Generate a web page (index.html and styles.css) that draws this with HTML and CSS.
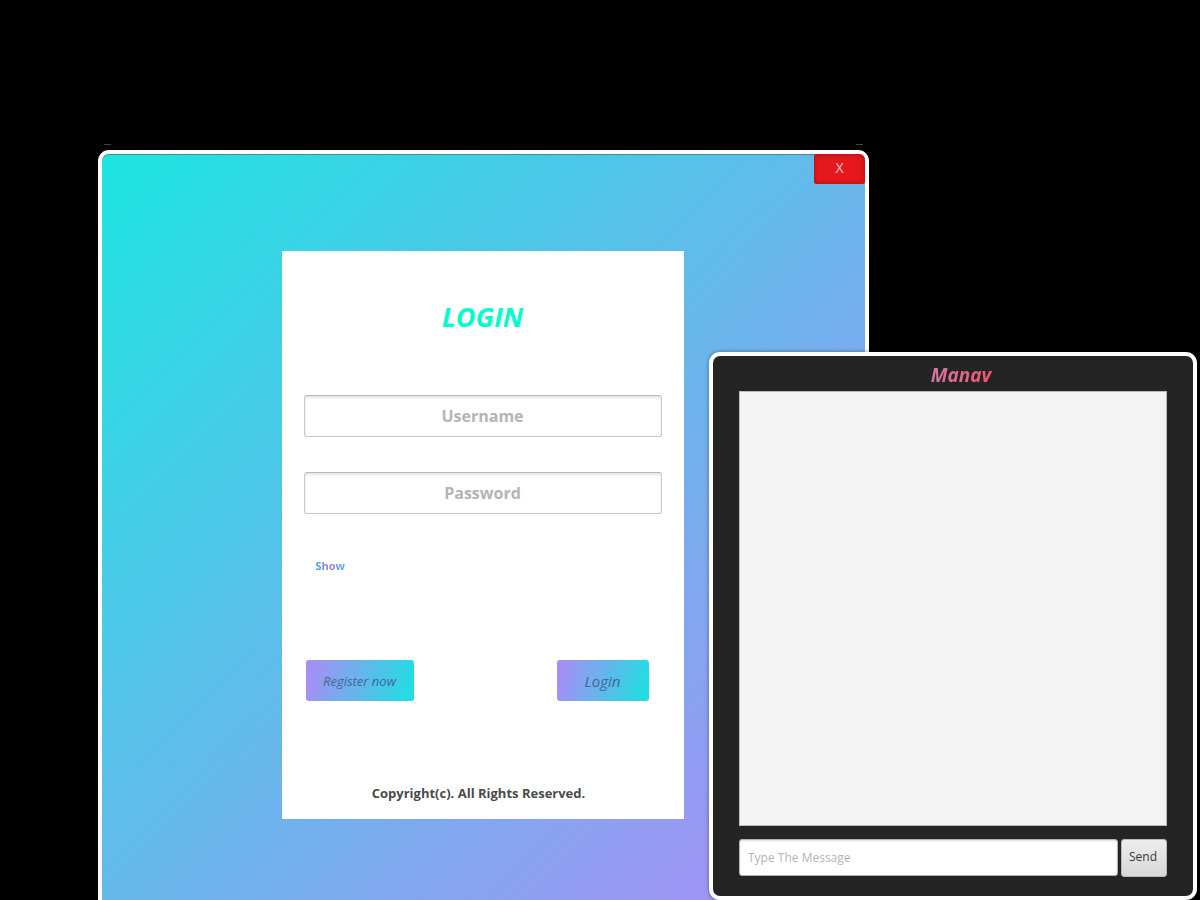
FILE: index.html
```html
<!DOCTYPE html>
<html lang="en">
<head>
<meta charset="utf-8">
<title>Login</title>
<link rel="stylesheet" href="styles.css">
</head>
<body>
<div class="desktop">
  <span class="tick tick-left"></span>
  <span class="tick tick-right"></span>
  <section class="window login-window">
    <button class="close" type="button">X</button>
    <main class="login-body">
      <form class="card">
        <h1 class="title">LOGIN</h1>
        <input class="field" type="text" placeholder="Username" aria-label="Username">
        <input class="field" type="password" placeholder="Password" aria-label="Password">
        <a class="show" href="#">Show</a>
        <div class="actions">
          <button class="action register" type="button">Register now</button>
          <button class="action login" type="submit">Login</button>
        </div>
        <p class="copyright">Copyright(c). All Rights Reserved.</p>
      </form>
    </main>
  </section>
  <section class="window chat-window">
    <h2 class="contact"><span class="contact-name">Manav</span></h2>
    <div class="messages"></div>
    <form class="composer">
      <input class="message" type="text" placeholder="Type The Message" aria-label="Message">
      <button class="send" type="button">Send</button>
    </form>
  </section>
</div>
</body>
</html>
```
FILE: styles.css
```css
* { box-sizing: border-box; }
body {
  margin: 0;
  background: #000;
  font-family: "Open Sans", "Noto Sans", sans-serif;
}
h1, h2, p { margin: 0; }
input, button { font-family: inherit; margin: 0; }

.desktop {
  position: relative;
  height: 100vh;
  overflow: hidden;
}
.tick {
  position: absolute;
  top: 144px;
  width: 7px;
  height: 1px;
  background: #444;
}
.tick-left { left: 104px; }
.tick-right { right: 337px; }

.window {
  position: absolute;
  border: 4px solid #fff;
  border-radius: 11px;
}

.login-window {
  top: 150px;
  left: 98px;
  right: 331px;
  background: linear-gradient(to bottom right, #1de5e1, #b08af7) padding-box;
  box-shadow: inset 0 1px 0 #3b8f96;
}
.close {
  position: absolute;
  top: 0;
  right: 0;
  width: 51px;
  height: 30px;
  padding: 0 0 4px;
  border: 0;
  border-radius: 3px 6px 3px 3px;
  background: #e5191d;
  box-shadow: inset 0 0 5px 1px #b81014;
  color: #f8c4c0;
  font-size: 14px;
}
.login-body {
  display: flex;
  justify-content: center;
  padding: 97px 2px 97px 0;
}
.card {
  display: flex;
  flex-direction: column;
  width: 402px;
  padding: 48px 22px 16px;
  background: #fff;
}
.title {
  color: #0fc;
  font-size: 27px;
  font-style: italic;
  line-height: 36px;
  text-align: center;
  margin-bottom: 60px;
}
.field {
  width: 100%;
  height: 42px;
  margin-bottom: 35px;
  border: 1px solid #c8c8c8;
  border-top-color: #b8b8b8;
  border-radius: 3px;
  background: #fff;
  box-shadow: inset 0 2px 3px #e4e4e4;
  font-size: 16px;
  font-weight: 700;
  text-align: center;
}
.field::placeholder { color: #b4b4b4; opacity: 1; }
.show {
  align-self: flex-start;
  margin: 7px 12px 84px;
  background: linear-gradient(90deg, #2fa8dc, #a874e0 50%, #3fb4e0);
  background-clip: text;
  color: transparent;
  font-size: 11px;
  font-weight: 700;
  line-height: 20px;
  text-decoration: none;
}
.actions {
  display: flex;
  justify-content: space-between;
  padding: 0 13px 0 2px;
  margin-bottom: 82px;
}
.action {
  height: 41px;
  padding: 0;
  border: 0;
  border-radius: 3px;
  background: linear-gradient(105deg, #ae8af7, #22dde1 94%);
  color: #3f6795;
  font-style: italic;
}
.register { width: 108px; font-size: 13px; }
.login { width: 92px; font-size: 15px; }
.copyright {
  color: #4a4a4a;
  font-size: 13px;
  font-weight: 700;
  line-height: 20px;
  text-align: center;
  padding-right: 8px;
}

.chat-window {
  display: flex;
  flex-direction: column;
  top: 352px;
  right: 3px;
  bottom: 0;
  left: 709px;
  padding: 5px 26px 19px;
  background: #242424;
  box-shadow: 0 0 4px #0006;
}
.contact {
  font-size: 19px;
  font-style: italic;
  line-height: 28px;
  text-align: center;
  padding-left: 16px;
  margin-bottom: 2px;
}
.contact-name {
  padding: 0 1px;
  background: linear-gradient(90deg, #cf7ba4, #f2566f);
  background-clip: text;
  color: transparent;
}
.messages {
  flex: 1;
  border: 1px solid #bbb;
  background: #f4f4f4;
}
.composer {
  display: flex;
  gap: 3px;
  margin-top: 13px;
}
.message {
  flex: 1;
  min-width: 0;
  height: 37px;
  padding: 0 8px;
  border: 1px solid #b4b4b4;
  border-radius: 3px;
  background: #fff;
  box-shadow: inset 0 1px 2px #ddd;
  font-size: 12px;
}
.message::placeholder { color: #b4b4b4; opacity: 1; }
.send {
  width: 46px;
  height: 38px;
  padding: 0 2px 3px 0;
  border: 1px solid #bababa;
  border-radius: 3px;
  background: linear-gradient(#ededed, #d8d8d8);
  color: #383838;
  font-size: 12px;
}
```
